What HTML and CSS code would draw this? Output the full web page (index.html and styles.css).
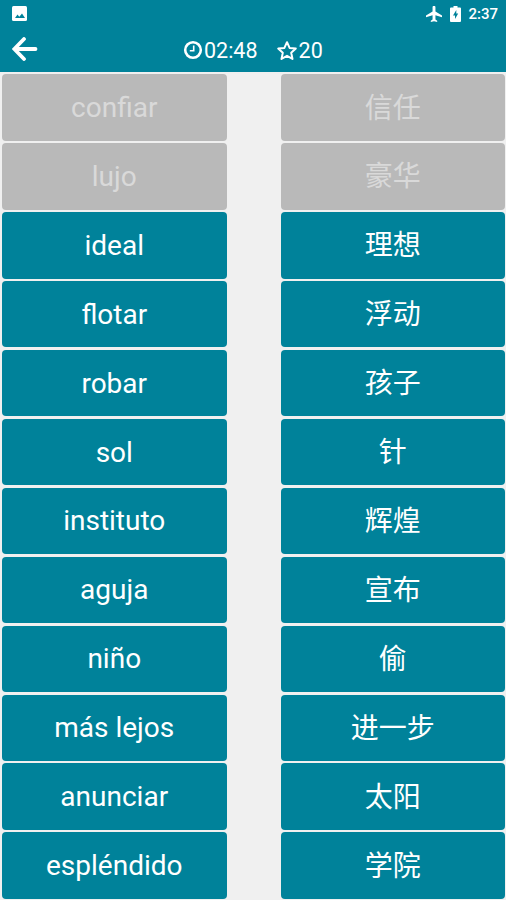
FILE: index.html
```html
<!DOCTYPE html>
<html lang="es">
<head>
  <meta charset="UTF-8">
  <title>Vocabulario</title>
  <meta name="viewport" content="width=device-width, initial-scale=1.0">
  <link rel="stylesheet" href="styles.css">
</head>
<body>

<div class="app">

  <!-- Status bar -->
  <div class="status-bar">
    <svg class="picture-icon" viewBox="0 0 15 15" width="15" height="15">
      <rect width="15" height="15" rx="1.5" fill="#fff"/>
      <path d="M3 12l2.5-3.5 1.8 2.2L10 7.5l3 4.5z" fill="#00829a"/>
    </svg>
    <div class="status-right">
      <svg class="plane-icon" viewBox="2 2 20 20" width="16" height="16">
        <path d="M10.2 9V3.5a1.8 1.8 0 0 1 3.6 0V9l8.2 5v2l-8.2-2.5V19l2.2 1.5V22l-4-1-4 1v-1.5l2.2-1.5v-5.5L2 16v-2z" fill="#fff"/>
      </svg>
      <svg class="battery-icon" viewBox="0 0 11 16" width="11" height="16">
        <path d="M3.5 0h4v1.5H10a1 1 0 0 1 1 1V15a1 1 0 0 1-1 1H1a1 1 0 0 1-1-1V2.5a1 1 0 0 1 1-1h2.5z" fill="#fff"/>
        <path d="M6.3 4L3 9.5h2V13l3.2-5.5H6.3z" fill="#00829a"/>
      </svg>
      <span class="clock">2:37</span>
    </div>
  </div>

  <!-- Toolbar -->
  <div class="toolbar">
    <svg class="back" viewBox="0 0 26 24" width="26" height="24">
      <path d="M12 2L2.3 12l9.7 10M3 12h20.5" fill="none" stroke="#fff" stroke-width="3.8" stroke-linecap="round" stroke-linejoin="miter"/>
    </svg>
    <div class="timer">
      <svg viewBox="0 0 20 20" width="20" height="20">
        <circle cx="10" cy="10" r="7.8" fill="none" stroke="#fff" stroke-width="2.6"/>
        <path d="M10.7 5.5v5.2H6.8" fill="none" stroke="#fff" stroke-width="1.6"/>
      </svg>
      <span>02:48</span>
    </div>
    <div class="score">
      <svg viewBox="0 0 22 21" width="22" height="21">
        <path d="M11 2.2l2.6 5.7 6.2.7-4.6 4.2 1.3 6.1L11 15.8l-5.5 3.1 1.3-6.1L2.2 8.6l6.2-.7z" fill="none" stroke="#fff" stroke-width="2" stroke-linejoin="round"/>
      </svg>
      <span>20</span>
    </div>
  </div>

  <!-- Word pairs -->
  <div class="board">
    <div class="column">
      <button class="word done">confiar</button>
      <button class="word done">lujo</button>
      <button class="word">ideal</button>
      <button class="word">flotar</button>
      <button class="word">robar</button>
      <button class="word">sol</button>
      <button class="word">instituto</button>
      <button class="word">aguja</button>
      <button class="word">niño</button>
      <button class="word">más lejos</button>
      <button class="word">anunciar</button>
      <button class="word">espléndido</button>
    </div>
    <div class="column chinese" lang="zh-CN">
      <button class="word done">信任</button>
      <button class="word done">豪华</button>
      <button class="word">理想</button>
      <button class="word">浮动</button>
      <button class="word">孩子</button>
      <button class="word">针</button>
      <button class="word">辉煌</button>
      <button class="word">宣布</button>
      <button class="word">偷</button>
      <button class="word">进一步</button>
      <button class="word">太阳</button>
      <button class="word">学院</button>
    </div>
  </div>

</div>

</body>
</html>
```

FILE: styles.css
```css
* {
  box-sizing: border-box;
}

body {
  margin: 0;
  font-family: Roboto, "Noto Sans CJK SC", sans-serif;
  background-color: #f0f0f0;
}

svg {
  display: block;
  flex: none;
}

.app {
  height: 100vh;
  display: flex;
  flex-direction: column;
}

.status-bar {
  height: 27px;
  padding: 0 8px 0 12px;
  display: flex;
  align-items: center;
  justify-content: space-between;
  background-color: #00829a;
  color: white;
}

.status-right {
  display: flex;
  align-items: center;
}

.plane-icon {
  margin-right: 8px;
}

.battery-icon {
  margin-right: 7px;
}

.clock {
  font-size: 15px;
  font-weight: 500;
  line-height: 18px;
}

.toolbar {
  height: 45px;
  padding: 1px 0 0 12px;
  display: flex;
  align-items: center;
  background-color: #00829a;
  color: white;
  font-size: 21.5px;
}

.back {
  margin: 0 145px 2px 0;
}

.timer,
.score {
  display: flex;
  align-items: center;
  gap: 1px;
}

.timer {
  margin-right: 18px;
}

.board {
  flex: 1;
  display: flex;
  justify-content: space-between;
  padding: 2.4px 1px 1.3px 2px;
}

.column {
  width: 224.5px;
  display: grid;
  grid-template-rows: repeat(12, 1fr);
  gap: 2.6px;
}

.word {
  min-height: 0;
  padding: 1px 0 0;
  border: none;
  border-radius: 4px;
  background-color: #00829a;
  color: white;
  font-family: inherit;
  font-size: 28px;
  line-height: 34px;
}

.chinese .word {
  padding-top: 2px;
}

.word.done {
  background-color: #b9b9b9;
  color: #d9d9d9;
}
```
